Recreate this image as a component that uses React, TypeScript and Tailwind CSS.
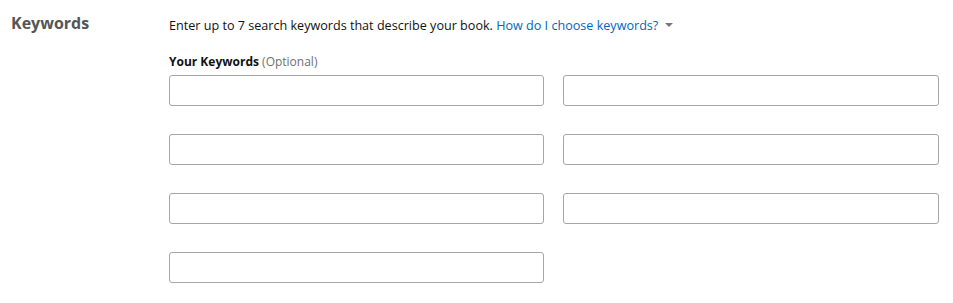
import React from "react";

export default function App() {
  const font = { fontFamily: '"Open Sans", "Liberation Sans", sans-serif' };
  return (
    <div className="w-[953px] h-[303px] bg-white" style={font}>
      <div className="flex">
        <div className="w-[169px] pl-[11px] pt-[12px]">
          <h2 className="text-[16px] leading-[22px] font-bold text-[#555555]">Keywords</h2>
        </div>
        <div className="w-[770px] pt-[16px]">
          <p className="text-[12.6px] leading-[19px] text-[#111111]">
            Enter up to 7 search keywords that describe your book.{" "}
            <span className="text-[#0066c0]">How do I choose keywords?</span>
            <span className="inline-block ml-[7px] align-middle mb-[3px] w-0 h-0 border-l-[4px] border-r-[4px] border-t-[4px] border-l-transparent border-r-transparent border-t-[#777777]" />
          </p>
          <div className="mt-[18px] text-[12px] leading-[17px] text-[#111111]">
            <span className="font-bold">Your Keywords</span>{" "}
            <span className="text-[12px] text-[#6f6f6f]">(Optional)</span>
          </div>
          <div className="mt-[5px] grid grid-cols-[375px_376px] gap-x-[19px] gap-y-[28px]">
            {Array.from({ length: 7 }).map((_, i) => (
              <input
                key={i}
                type="text"
                className="h-[31px] w-full rounded-[3px] border border-[#a6a6a6] bg-white px-2 text-[13px] outline-none"
              />
            ))}
          </div>
        </div>
      </div>
    </div>
  );
}
